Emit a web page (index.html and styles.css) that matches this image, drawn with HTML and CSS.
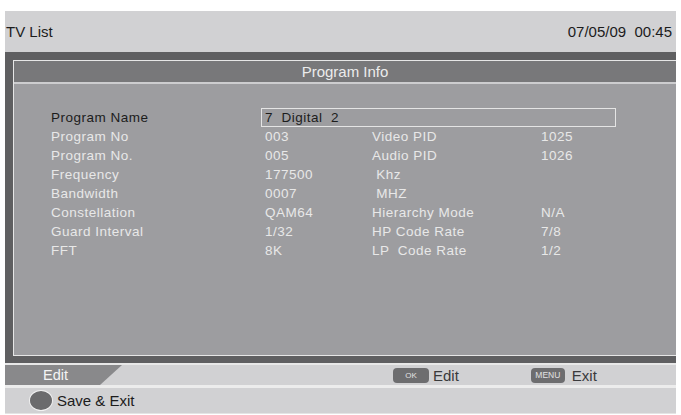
FILE: index.html
```html
<!DOCTYPE HTML>
<html>
    <head>
        <meta charset='utf-8'/>
        <link rel="stylesheet" href="styles.css">
    </head>
    <body>
        <div class="screen">
            <div class="header">
                <span>TV List</span>
                <span class="clock">07/05/09  00:45</span>
            </div>
            <div class="frame">
                <div class="panel">
                    <div class="title">Program Info</div>
                    <div class="body">
                        <div class="grid">
                            <div class="lbl sel">Program Name</div>
                            <div class="namebox">7  Digital  2</div>

                            <div class="lbl">Program No</div>
                            <div class="val">003</div>
                            <div class="lbl">Video PID</div>
                            <div class="val">1025</div>

                            <div class="lbl">Program No.</div>
                            <div class="val">005</div>
                            <div class="lbl">Audio PID</div>
                            <div class="val">1026</div>

                            <div class="lbl">Frequency</div>
                            <div class="val">177500</div>
                            <div class="lbl"> Khz</div>
                            <div class="val"></div>

                            <div class="lbl">Bandwidth</div>
                            <div class="val">0007</div>
                            <div class="lbl"> MHZ</div>
                            <div class="val"></div>

                            <div class="lbl">Constellation</div>
                            <div class="val">QAM64</div>
                            <div class="lbl">Hierarchy Mode</div>
                            <div class="val">N/A</div>

                            <div class="lbl">Guard Interval</div>
                            <div class="val">1/32</div>
                            <div class="lbl">HP Code Rate</div>
                            <div class="val">7/8</div>

                            <div class="lbl">FFT</div>
                            <div class="val">8K</div>
                            <div class="lbl">LP  Code Rate</div>
                            <div class="val">1/2</div>
                        </div>
                    </div>
                </div>
            </div>
            <div class="keybar">
                <div class="tab"><span>Edit</span></div>
                <div class="hint ok"><span class="key">OK</span>Edit</div>
                <div class="hint menu"><span class="key">MENU</span>Exit</div>
            </div>
            <div class="savebar">
                <span class="dot"></span>Save &amp; Exit
            </div>
        </div>
    </body>
</html>
```

FILE: styles.css
```css
body{
    margin: 0;
    background: #fff;
    font-family: "Liberation Sans", Arial, sans-serif;
}
.screen{
    width: 671px;
    margin-left: 5px;
    padding-top: 11px;
}
.header{
    height: 41px;
    background: #d1d1d3;
    display: flex;
    justify-content: space-between;
    align-items: center;
    font-size: 15px;
    color: #1c1c1c;
    padding: 0 4px 0 1px;
    box-sizing: border-box;
}
.clock{
    white-space: pre;
}
.frame{
    background: #5f5f61;
    padding: 8px 0 7px 8px;
}
.panel{
    border: 1px solid #e6e6e6;
    border-right: none;
}
.title{
    height: 21px;
    line-height: 21px;
    background: #78787a;
    color: #ececec;
    text-align: center;
    font-size: 15px;
    border-bottom: 2px solid #cdcdcf;
}
.body{
    height: 247px;
    background: #9d9da0;
    padding-top: 24px;
}
.grid{
    display: grid;
    grid-template-columns: 210px 111px 165px 1fr;
    grid-auto-rows: 19px;
    padding-left: 37px;
    font-size: 13.5px;
    letter-spacing: 0.5px;
    color: #e8e8e8;
}
.lbl, .val, .namebox{
    line-height: 19px;
    white-space: pre;
}
.val{
    padding-left: 4px;
}
.lbl.sel{
    color: #1c1c1c;
}
.namebox{
    grid-column: 2 / -1;
    width: 355px;
    box-sizing: border-box;
    border: 1px solid #e4e4e4;
    line-height: 17px;
    padding-left: 3px;
    color: #1c1c1c;
}
.keybar{
    height: 20px;
    background: #d1d1d3;
    border-top: 2px solid #e8e8e8;
    border-bottom: 3px solid #ececec;
    display: flex;
    align-items: center;
    font-size: 15px;
    color: #3a3a3c;
}
.tab{
    width: 117px;
    height: 20px;
    background: #89898b;
    clip-path: polygon(0 0, 100% 0, 95px 100%, 0 100%);
    color: #f4f4f4;
    font-size: 14.5px;
    line-height: 20px;
}
.tab span{
    margin-left: 38px;
}
.hint{
    display: flex;
    align-items: center;
}
.hint.ok{
    margin-left: 271px;
}
.hint.menu{
    margin-left: 72px;
}
.key{
    display: inline-block;
    height: 15px;
    line-height: 15px;
    padding: 0 4px;
    min-width: 28px;
    border-radius: 4px;
    background: #6d6d6f;
    color: #e2e2e2;
    font-size: 8px;
    text-align: center;
    margin-right: 4px;
}
.menu .key{
    min-width: 26px;
    font-size: 8.5px;
    margin-right: 7px;
}
.savebar{
    height: 25px;
    background: #d1d1d3;
    border-bottom: 1px solid #e4e4e4;
    display: flex;
    align-items: center;
    font-size: 15px;
    color: #1c1c1c;
}
.dot{
    width: 22px;
    height: 19px;
    border-radius: 50%;
    background: #6b6b6d;
    border: 1.5px solid #f2f2f2;
    margin-left: 24px;
    margin-right: 4px;
}
```
